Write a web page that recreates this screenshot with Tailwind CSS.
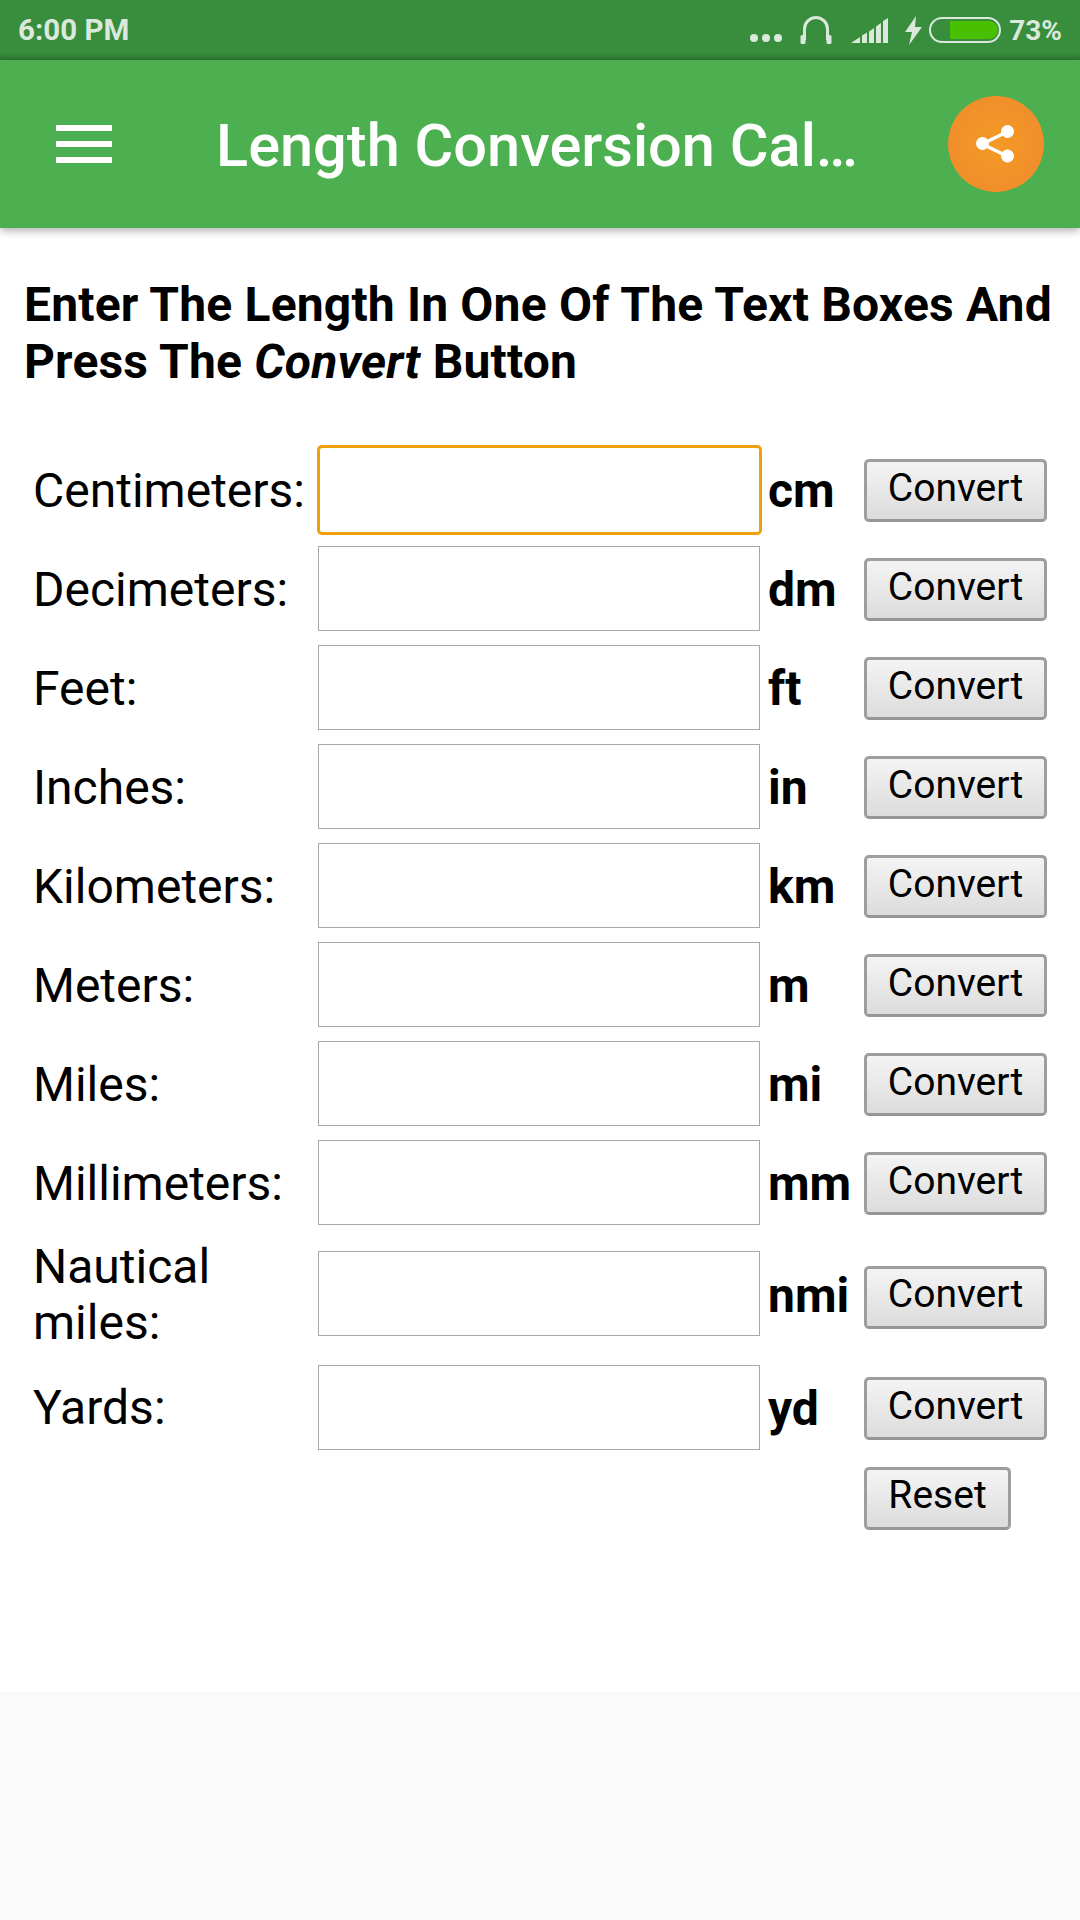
<!doctype html>
<html lang="en">

<head>
  <meta charset="UTF-8" />
  <meta name="viewport" content="width=device-width, initial-scale=1.0" />
  <title>Length Conversion Calculator</title>
  <script src="https://cdn.jsdelivr.net/npm/@tailwindcss/browser@4"></script>
</head>

<body class="min-h-screen bg-[#fafafa] font-[Roboto,sans-serif] text-black">
  <!-- status bar -->
  <div class="h-[60px] bg-[#388e3c] shadow-[inset_0_-7px_6px_-5px_rgba(0,0,0,0.25)] flex items-center justify-between pl-[18px] pr-[18px] text-[#dbe8dc]">
    <span class="mt-[2px] text-[29.500px] font-bold leading-none">6:00 PM</span>
    <div class="flex items-center">
      <svg class="w-[32px] h-[8px] mt-[16px]" viewBox="0 0 32 8" fill="currentColor">
        <circle cx="4" cy="4" r="4" /><circle cx="16" cy="4" r="4" /><circle cx="28" cy="4" r="4" />
      </svg>
      <svg class="w-[32px] h-[28px] ml-[18px]" viewBox="0 0 32 28" fill="none" stroke="currentColor">
        <path stroke-width="3" d="M4.500 24V13a11.500 11.500 0 0 1 23 0v11" />
        <rect x="0.500" y="19" width="5" height="9" rx="1.500" fill="currentColor" stroke="none" />
        <rect x="26.500" y="19" width="5" height="9" rx="1.500" fill="currentColor" stroke="none" />
      </svg>
      <svg class="w-[37px] h-[25px] ml-[19px]" viewBox="0 0 37 25" fill="currentColor">
        <path d="M0 25 9 19V25ZM11 17.500 16 14.500V25H11ZM18 13.500 23 10V25H18ZM25 8.500 30 5V25H25ZM32 3 37 0V25H32Z" />
      </svg>
      <svg class="w-[17px] h-[29px] ml-[17px]" viewBox="0 0 17 29" fill="currentColor">
        <path d="M11 0 0 16H7L4 29 17 11H10Z" />
      </svg>
      <div class="relative w-[72px] h-[26px] ml-[7px] rounded-full border-[2px] border-[#dbe8dc]">
        <div class="absolute right-[1px] top-[2px] bottom-[2px] w-[48px] rounded-r-full bg-[#48c000]"></div>
      </div>
      <span class="mt-[1px] text-[28px] font-bold leading-none ml-[8px]">73%</span>
    </div>
  </div>

  <!-- app bar -->
  <header class="relative z-10 h-[168px] bg-[#4caf50] shadow-[0_3px_8px_rgba(0,0,0,0.3)] flex items-center">
    <div class="ml-[56px] w-[56px] flex flex-col gap-[10px]">
      <div class="h-[6px] bg-white"></div>
      <div class="h-[6px] bg-white"></div>
      <div class="h-[6px] bg-white"></div>
    </div>
    <h1 class="ml-[104px] mt-[5px] w-[650px] text-[59.500px] font-medium leading-none text-white whitespace-nowrap">Length Conversion Cal…</h1>
    <div class="ml-auto mr-[36px] w-[96px] h-[96px] rounded-full bg-[radial-gradient(circle,#f39a24,#f08a2e)] flex items-center justify-center">
      <svg class="w-[48px] h-[48px]" viewBox="0 0 48 48" fill="white" stroke="white">
        <path fill="none" stroke-width="3.500" d="M35 12 10 24 35 36" />
        <circle cx="35.500" cy="11.500" r="6.500" stroke="none" />
        <circle cx="10.500" cy="23.500" r="6.500" stroke="none" />
        <circle cx="35.500" cy="36" r="6.500" stroke="none" />
      </svg>
    </div>
  </header>

  <main class="h-[1464px] bg-white pt-[48px]">
    <h2 class="pl-[24px] text-[48px] tracking-[0.17px] font-bold leading-[57px]">Enter The Length In One Of The Text Boxes And Press The <em>Convert</em> Button</h2>

    <form class="mt-[57px] pl-[33px] grid grid-cols-[285px_442px_104px_183px] gap-y-[14px] items-center text-[48px] leading-[56px]">
      <label class="mt-[2px]">Centimeters:</label>
      <input type="text" class="h-[86px] -mb-[1px] ml-[1px] border border-[#ee9f0a] rounded-[3px] ring-[2px] ring-[#ee9f0a] bg-white" />
      <b class="pl-[8px] mt-[2px]">cm</b>
      <button type="button" class="h-[63px] w-[183px] mt-[2px] border-[3px] border-[#9e9e9e] border-b-[#969696] rounded-[5px] bg-linear-to-b from-[#f4f4f4] to-[#dcdcdc] text-[39px] leading-none pb-[5px]">Convert</button>

      <label class="mt-[2px]">Decimeters:</label>
      <input type="text" class="h-[85px] border border-[#a8a8a8] bg-white" />
      <b class="pl-[8px] mt-[2px]">dm</b>
      <button type="button" class="h-[63px] w-[183px] mt-[2px] border-[3px] border-[#9e9e9e] border-b-[#969696] rounded-[5px] bg-linear-to-b from-[#f4f4f4] to-[#dcdcdc] text-[39px] leading-none pb-[5px]">Convert</button>

      <label class="mt-[2px]">Feet:</label>
      <input type="text" class="h-[85px] border border-[#a8a8a8] bg-white" />
      <b class="pl-[8px] mt-[2px]">ft</b>
      <button type="button" class="h-[63px] w-[183px] mt-[2px] border-[3px] border-[#9e9e9e] border-b-[#969696] rounded-[5px] bg-linear-to-b from-[#f4f4f4] to-[#dcdcdc] text-[39px] leading-none pb-[5px]">Convert</button>

      <label class="mt-[2px]">Inches:</label>
      <input type="text" class="h-[85px] border border-[#a8a8a8] bg-white" />
      <b class="pl-[8px] mt-[2px]">in</b>
      <button type="button" class="h-[63px] w-[183px] mt-[2px] border-[3px] border-[#9e9e9e] border-b-[#969696] rounded-[5px] bg-linear-to-b from-[#f4f4f4] to-[#dcdcdc] text-[39px] leading-none pb-[5px]">Convert</button>

      <label class="mt-[2px]">Kilometers:</label>
      <input type="text" class="h-[85px] border border-[#a8a8a8] bg-white" />
      <b class="pl-[8px] mt-[2px]">km</b>
      <button type="button" class="h-[63px] w-[183px] mt-[2px] border-[3px] border-[#9e9e9e] border-b-[#969696] rounded-[5px] bg-linear-to-b from-[#f4f4f4] to-[#dcdcdc] text-[39px] leading-none pb-[5px]">Convert</button>

      <label class="mt-[2px]">Meters:</label>
      <input type="text" class="h-[85px] border border-[#a8a8a8] bg-white" />
      <b class="pl-[8px] mt-[2px]">m</b>
      <button type="button" class="h-[63px] w-[183px] mt-[2px] border-[3px] border-[#9e9e9e] border-b-[#969696] rounded-[5px] bg-linear-to-b from-[#f4f4f4] to-[#dcdcdc] text-[39px] leading-none pb-[5px]">Convert</button>

      <label class="mt-[2px]">Miles:</label>
      <input type="text" class="h-[85px] border border-[#a8a8a8] bg-white" />
      <b class="pl-[8px] mt-[2px]">mi</b>
      <button type="button" class="h-[63px] w-[183px] mt-[2px] border-[3px] border-[#9e9e9e] border-b-[#969696] rounded-[5px] bg-linear-to-b from-[#f4f4f4] to-[#dcdcdc] text-[39px] leading-none pb-[5px]">Convert</button>

      <label class="mt-[2px]">Millimeters:</label>
      <input type="text" class="h-[85px] border border-[#a8a8a8] bg-white" />
      <b class="pl-[8px] mt-[2px]">mm</b>
      <button type="button" class="h-[63px] w-[183px] mt-[2px] border-[3px] border-[#9e9e9e] border-b-[#969696] rounded-[5px] bg-linear-to-b from-[#f4f4f4] to-[#dcdcdc] text-[39px] leading-none pb-[5px]">Convert</button>

      <label>Nautical miles:</label>
      <input type="text" class="h-[85px] mb-[3px] border border-[#a8a8a8] bg-white" />
      <b class="pl-[8px] mt-[2px]">nmi</b>
      <button type="button" class="h-[63px] w-[183px] mt-[4px] border-[3px] border-[#9e9e9e] border-b-[#969696] rounded-[5px] bg-linear-to-b from-[#f4f4f4] to-[#dcdcdc] text-[39px] leading-none pb-[5px]">Convert</button>

      <label>Yards:</label>
      <input type="text" class="h-[85px] border border-[#a8a8a8] bg-white" />
      <b class="pl-[8px] mt-[2px]">yd</b>
      <button type="button" class="h-[63px] w-[183px] mt-[2px] border-[3px] border-[#9e9e9e] border-b-[#969696] rounded-[5px] bg-linear-to-b from-[#f4f4f4] to-[#dcdcdc] text-[39px] leading-none pb-[5px]">Convert</button>

      <button type="reset" class="col-start-4 mt-[3px] h-[63px] w-[147px] border-[3px] border-[#9e9e9e] border-b-[#969696] rounded-[5px] bg-linear-to-b from-[#f4f4f4] to-[#dcdcdc] text-[39px] leading-none pb-[6px]">Reset</button>
    </form>
  </main>
</body>

</html>
